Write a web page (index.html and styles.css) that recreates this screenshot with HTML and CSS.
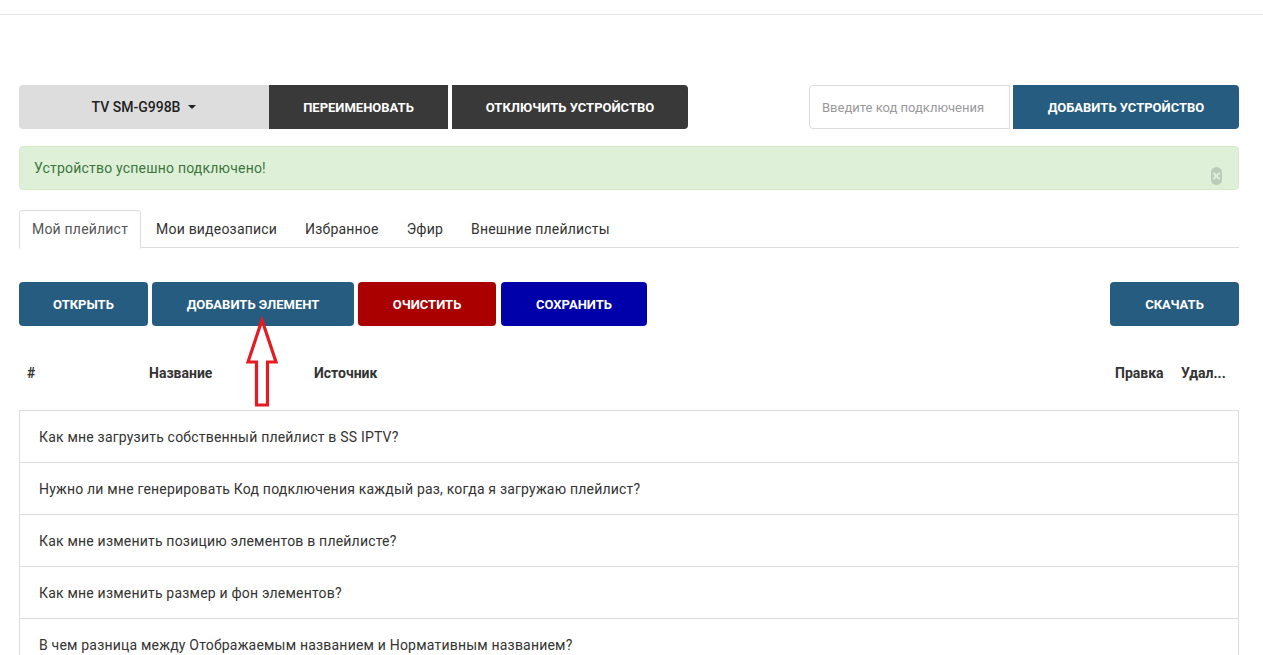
FILE: index.html
```html
<!DOCTYPE html>
<html lang="ru">
<head>
<meta charset="utf-8">
<title>Мой плейлист</title>
<link rel="stylesheet" href="styles.css">
</head>
<body>
<div class="topbar"></div>
<main class="container">
  <div class="device-row">
    <div class="device-group">
      <div class="device-select">TV SM-G998B <span class="caret"></span></div>
      <button class="btn btn-dark">ПЕРЕИМЕНОВАТЬ</button>
      <button class="btn btn-dark btn-last">ОТКЛЮЧИТЬ УСТРОЙСТВО</button>
    </div>
    <div class="add-group">
      <input class="code-input" type="text" placeholder="Введите код подключения">
      <button class="btn btn-blue btn-add">ДОБАВИТЬ УСТРОЙСТВО</button>
    </div>
  </div>

  <div class="alert">
    Устройство успешно подключено!
    <span class="alert-close"></span>
  </div>

  <ul class="tabs">
    <li class="tab active">Мой плейлист</li>
    <li class="tab">Мои видеозаписи</li>
    <li class="tab">Избранное</li>
    <li class="tab">Эфир</li>
    <li class="tab">Внешние плейлисты</li>
  </ul>

  <div class="actions">
    <div class="actions-left">
      <button class="btn btn-blue w-open">ОТКРЫТЬ</button>
      <button class="btn btn-blue w-add">ДОБАВИТЬ ЭЛЕМЕНТ</button>
      <button class="btn btn-red w-clear">ОЧИСТИТЬ</button>
      <button class="btn btn-navy w-save">СОХРАНИТЬ</button>
    </div>
    <button class="btn btn-blue w-dl">СКАЧАТЬ</button>
    <svg class="arrow" width="34" height="92" viewBox="0 0 34 92">
      <polygon points="16,3 30,45 21.5,45 21.5,88 10.5,88 10.5,45 2,45" fill="none" stroke="#e31b23" stroke-width="3.2" stroke-linejoin="miter"/>
    </svg>
  </div>

  <div class="thead">
    <span class="th th-num">#</span>
    <span class="th th-name">Название</span>
    <span class="th th-src">Источник</span>
    <span class="th th-edit">Правка</span>
    <span class="th th-del">Удал...</span>
  </div>

  <ul class="faq">
    <li>Как мне загрузить собственный плейлист в SS IPTV?</li>
    <li>Нужно ли мне генерировать Код подключения каждый раз, когда я загружаю плейлист?</li>
    <li>Как мне изменить позицию элементов в плейлисте?</li>
    <li>Как мне изменить размер и фон элементов?</li>
    <li>В чем разница между Отображаемым названием и Нормативным названием?</li>
  </ul>
</main>
</body>
</html>
```
FILE: styles.css
```css
* { box-sizing: border-box; }
html, body { margin: 0; padding: 0; background: #fff; }
body {
  font-family: Roboto, "Liberation Sans", sans-serif;
  font-size: 14px;
  color: #333;
  overflow: hidden;
}
.topbar {
  height: 15px;
  border-bottom: 1px solid #e3e3e3;
}
.container {
  margin-left: 19px;
  width: 1220px;
  padding-top: 70px;
}
.device-row {
  display: flex;
  justify-content: space-between;
  height: 44px;
}
.device-group, .add-group { display: flex; }
.device-select {
  width: 250px;
  background: #dddddd;
  border-radius: 4px 0 0 4px;
  display: flex;
  align-items: center;
  justify-content: center;
  font-size: 14px;
  font-weight: 500;
  color: #222;
}
.caret {
  display: inline-block;
  width: 0; height: 0;
  margin-left: 8px;
  border-left: 4px solid transparent;
  border-right: 4px solid transparent;
  border-top: 4px solid #222;
}
.btn {
  border: none;
  height: 44px;
  font-family: Roboto, "Liberation Sans", sans-serif;
  font-size: 13px;
  font-weight: 700;
  color: #fff;
  padding: 0;
  border-radius: 4px;
  cursor: pointer;
}
.btn-dark {
  background: #393939;
  border-radius: 0;
  width: 179px;
  margin-right: 4px;
}
.btn-dark.btn-last {
  width: 236px;
  margin-right: 0;
  border-radius: 0 4px 4px 0;
}
.btn-blue { background: #265c80; }
.btn-red { background: #aa0000; }
.btn-navy { background: #0000aa; }
.code-input {
  width: 201px;
  height: 44px;
  border: 1px solid #dcdcdc;
  border-radius: 4px 0 0 4px;
  padding: 0 12px;
  font-family: Roboto, "Liberation Sans", sans-serif;
  font-size: 13px;
  color: #555;
  margin-right: 3px;
  outline: none;
}
.code-input::placeholder { color: #999; }
.btn-add {
  width: 226px;
  border-radius: 0 4px 4px 0;
}
.alert {
  position: relative;
  margin-top: 17px;
  height: 44px;
  background: #dff0d8;
  border: 1px solid #d6e9c6;
  border-radius: 4px;
  color: #3c763d;
  padding: 12px 14px;
  line-height: 18px;
  letter-spacing: 0.2px;
}
.alert-close {
  position: absolute;
  right: 16px;
  top: 20px;
  width: 11px;
  height: 18px;
  border-radius: 6px;
  background: #b9cdb8;
}
.alert-close::before, .alert-close::after {
  content: "";
  position: absolute;
  left: 1px;
  top: 8px;
  width: 9px;
  height: 2px;
  background: #dff0d8;
  transform: rotate(45deg);
}
.alert-close::after { transform: rotate(-45deg); }
.tabs {
  list-style: none;
  margin: 20px 0 0;
  padding: 0;
  display: flex;
  border-bottom: 1px solid #dddddd;
  height: 38px;
  letter-spacing: 0.2px;
}
.tab {
  padding: 0 12px;
  margin-right: 2px;
  height: 38px;
  line-height: 37px;
  border: 1px solid transparent;
  border-radius: 4px 4px 0 0;
  color: #333;
}
.tab.active {
  border-color: #dddddd;
  border-bottom-color: #fff;
  background: #fff;
  color: #555;
  height: 39px;
}
.actions {
  position: relative;
  margin-top: 34px;
  display: flex;
  justify-content: space-between;
}
.actions-left { display: flex; gap: 4px; }
.w-open { width: 129px; }
.w-add { width: 202px; }
.w-clear { width: 138px; }
.w-save { width: 146px; margin-left: 1px; }
.w-dl { width: 129px; }
.arrow {
  position: absolute;
  left: 227px;
  top: 35px;
}
.thead {
  display: flex;
  height: 84px;
  padding-top: 10px;
  align-items: center;
  font-weight: 700;
  color: #333;
  font-size: 14px;
}
.th-num { width: 130px; padding-left: 8px; }
.th-name { width: 165px; }
.th-src { flex: 1; }
.th-edit { width: 66px; }
.th-del { width: 58px; }
.faq {
  list-style: none;
  margin: 0;
  padding: 0;
  border: 1px solid #dddddd;
  letter-spacing: 0.2px;
}
.faq li {
  height: 52px;
  line-height: 53px;
  padding-left: 19px;
  border-bottom: 1px solid #dddddd;
  color: #333;
  font-size: 14px;
}
```
